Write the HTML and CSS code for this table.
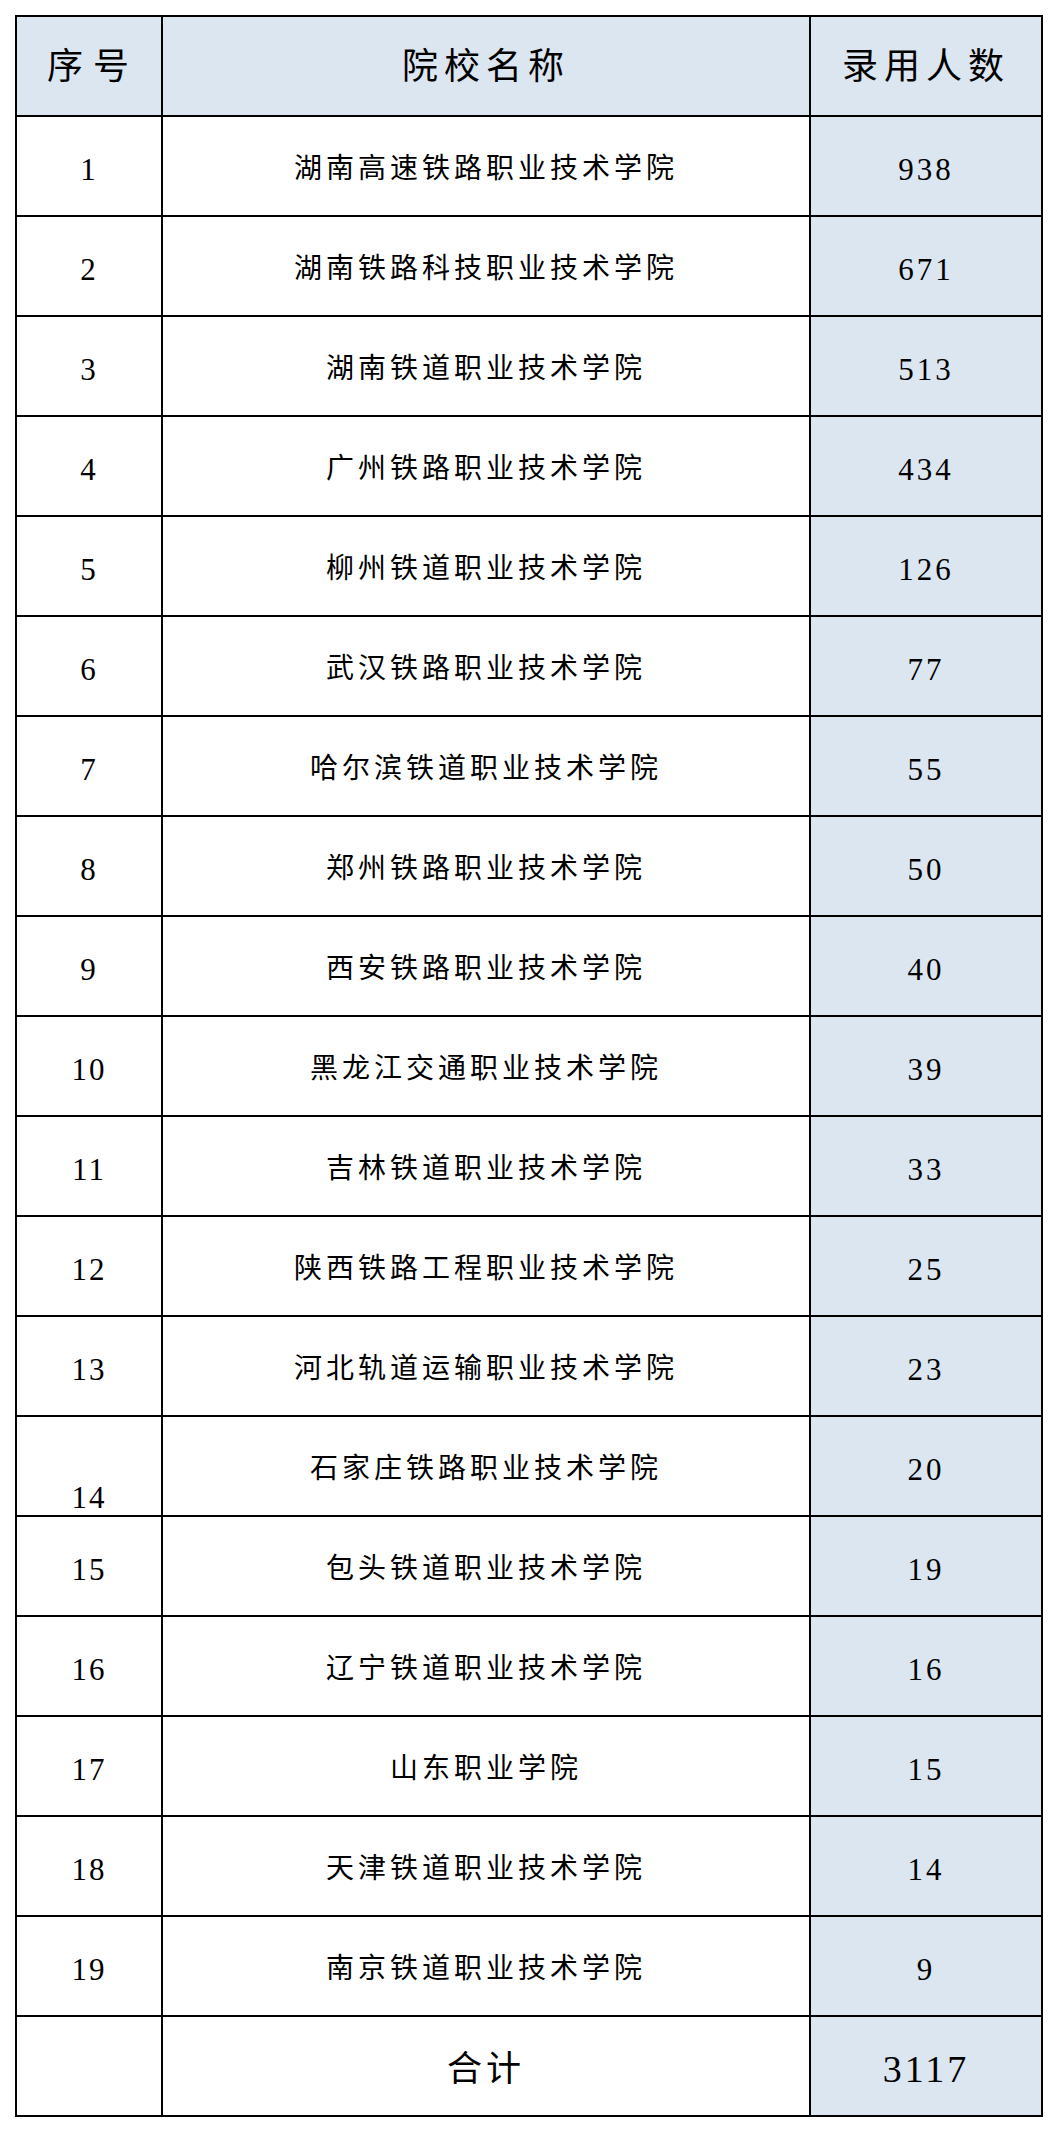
FILE: index.html
```html
<!DOCTYPE html>
<html lang="zh-CN">
<head>
<meta charset="utf-8">
<title>院校录用人数</title>
<link rel="stylesheet" href="styles.css">
</head>
<body>
<table class="sheet">
  <colgroup>
    <col class="c-idx">
    <col class="c-name">
    <col class="c-num">
  </colgroup>
  <thead>
    <tr class="head">
      <th class="h-idx">序号</th>
      <th class="h-name">院校名称</th>
      <th class="h-num">录用人数</th>
    </tr>
  </thead>
  <tbody>
    <tr><td class="idx">1</td><td class="name">湖南高速铁路职业技术学院</td><td class="num">938</td></tr>
    <tr><td class="idx">2</td><td class="name">湖南铁路科技职业技术学院</td><td class="num">671</td></tr>
    <tr><td class="idx">3</td><td class="name">湖南铁道职业技术学院</td><td class="num">513</td></tr>
    <tr><td class="idx">4</td><td class="name">广州铁路职业技术学院</td><td class="num">434</td></tr>
    <tr><td class="idx">5</td><td class="name">柳州铁道职业技术学院</td><td class="num">126</td></tr>
    <tr><td class="idx">6</td><td class="name">武汉铁路职业技术学院</td><td class="num">77</td></tr>
    <tr><td class="idx">7</td><td class="name">哈尔滨铁道职业技术学院</td><td class="num">55</td></tr>
    <tr><td class="idx">8</td><td class="name">郑州铁路职业技术学院</td><td class="num">50</td></tr>
    <tr><td class="idx">9</td><td class="name">西安铁路职业技术学院</td><td class="num">40</td></tr>
    <tr><td class="idx">10</td><td class="name">黑龙江交通职业技术学院</td><td class="num">39</td></tr>
    <tr><td class="idx">11</td><td class="name">吉林铁道职业技术学院</td><td class="num">33</td></tr>
    <tr><td class="idx">12</td><td class="name">陕西铁路工程职业技术学院</td><td class="num">25</td></tr>
    <tr><td class="idx">13</td><td class="name">河北轨道运输职业技术学院</td><td class="num">23</td></tr>
    <tr><td class="idx idx-bottom">14</td><td class="name">石家庄铁路职业技术学院</td><td class="num">20</td></tr>
    <tr><td class="idx">15</td><td class="name">包头铁道职业技术学院</td><td class="num">19</td></tr>
    <tr><td class="idx">16</td><td class="name">辽宁铁道职业技术学院</td><td class="num">16</td></tr>
    <tr><td class="idx">17</td><td class="name">山东职业学院</td><td class="num">15</td></tr>
    <tr><td class="idx">18</td><td class="name">天津铁道职业技术学院</td><td class="num">14</td></tr>
    <tr><td class="idx">19</td><td class="name">南京铁道职业技术学院</td><td class="num">9</td></tr>
    <tr class="total"><td class="idx"></td><td class="name total-label">合计</td><td class="num total-num">3117</td></tr>
  </tbody>
</table>
</body>
</html>
```

FILE: styles.css
```css
html, body {
  margin: 0;
  padding: 0;
  background: #ffffff;
}

body {
  padding: 15px;
  font-family: "Liberation Serif", "Noto Sans CJK SC", serif;
  color: #000000;
}

.sheet {
  table-layout: fixed;
  border-collapse: separate;
  border-spacing: 2px;
  background: #000000;
  width: 1028px;
}

.c-idx { width: 144px; }
.c-name { width: 646px; }
.c-num { width: 230px; }

.sheet th,
.sheet td {
  height: 98px;
  padding: 6px 0 0 0;
  box-sizing: border-box;
  text-align: center;
  vertical-align: middle;
  background: #ffffff;
  line-height: 1;
}

.head th {
  background: #dce6f1;
  font-weight: 400;
  font-size: 36px;
  letter-spacing: 6px;
  padding-top: 2px;
}

.head .h-idx {
  letter-spacing: 10px;
  padding-left: 8px;
}

.idx {
  font-size: 31px;
  letter-spacing: 2px;
}

.idx-bottom {
  vertical-align: bottom !important;
  padding-top: 0 !important;
  padding-bottom: 2px !important;
}

.name {
  font-size: 28px;
  letter-spacing: 4px;
}

.num {
  background: #dce6f1 !important;
  font-size: 31px;
  letter-spacing: 3px;
}

.total-label {
  font-size: 35px;
  letter-spacing: 4px;
}

.total-num {
  font-size: 38px;
  letter-spacing: 3px;
}
```
